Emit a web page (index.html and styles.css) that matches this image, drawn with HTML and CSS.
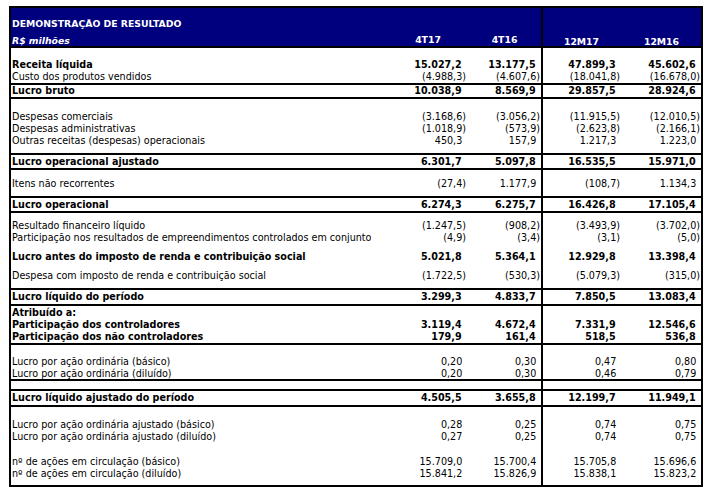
FILE: index.html
```html
<!DOCTYPE html>
<html lang="pt-BR">
<head>
<meta charset="utf-8">
<title>Demonstração de Resultado</title>
<link rel="stylesheet" href="styles.css">
</head>
<body>
<div class="sheet">
  <div class="head">
    <div class="title">DEMONSTRAÇÃO DE RESULTADO</div>
    <div class="unit">R$ milhões</div>
    <div class="hq">4T17</div>
    <div class="hq">4T16</div>
    <div class="hm">12M17</div>
    <div class="hm">12M16</div>
  </div>
  <div class="body">
    <div class="g11"></div>
    <div class="row b"><span>Receita líquida</span><span class="pos">15.027,2</span><span class="pos">13.177,5</span><span class="pos">47.899,3</span><span class="pos">45.602,6</span></div>
    <div class="row"><span>Custo dos produtos vendidos</span><span>(4.988,3)</span><span>(4.607,6)</span><span>(18.041,8)</span><span>(16.678,0)</span></div>
    <div class="row b bt bb"><span>Lucro bruto</span><span class="pos">10.038,9</span><span class="pos">8.569,9</span><span class="pos">29.857,5</span><span class="pos">28.924,6</span></div>
    <div class="g12"></div>
    <div class="row"><span>Despesas comerciais</span><span>(3.168,6)</span><span>(3.056,2)</span><span>(11.915,5)</span><span>(12.010,5)</span></div>
    <div class="row"><span>Despesas administrativas</span><span>(1.018,9)</span><span>(573,9)</span><span>(2.623,8)</span><span>(2.166,1)</span></div>
    <div class="row"><span>Outras receitas (despesas) operacionais</span><span class="pos">450,3</span><span class="pos">157,9</span><span class="pos">1.217,3</span><span class="pos">1.223,0</span></div>
    <div class="g6"></div>
    <div class="row b bt bb h13"><span>Lucro operacional ajustado</span><span class="pos">6.301,7</span><span class="pos">5.097,8</span><span class="pos">16.535,5</span><span class="pos">15.971,0</span></div>
    <div class="row h26"><span>Itens não recorrentes</span><span>(27,4)</span><span class="pos">1.177,9</span><span>(108,7)</span><span class="pos">1.134,3</span></div>
    <div class="row b bt bb h13"><span>Lucro operacional</span><span class="pos">6.274,3</span><span class="pos">6.275,7</span><span class="pos">16.426,8</span><span class="pos">17.105,4</span></div>
    <div class="g7"></div>
    <div class="row"><span>Resultado financeiro líquido</span><span>(1.247,5)</span><span>(908,2)</span><span>(3.493,9)</span><span>(3.702,0)</span></div>
    <div class="row"><span>Participação nos resultados de empreendimentos controlados em conjunto</span><span>(4,9)</span><span>(3,4)</span><span>(3,1)</span><span>(5,0)</span></div>
    <div class="g7"></div>
    <div class="row b"><span>Lucro antes do imposto de renda e contribuição social</span><span class="pos">5.021,8</span><span class="pos">5.364,1</span><span class="pos">12.929,8</span><span class="pos">13.398,4</span></div>
    <div class="g7"></div>
    <div class="row"><span>Despesa com imposto de renda e contribuição social</span><span>(1.722,5)</span><span>(530,3)</span><span>(5.079,3)</span><span>(315,0)</span></div>
    <div class="g6"></div>
    <div class="row b bt bb h14"><span>Lucro líquido do período</span><span class="pos">3.299,3</span><span class="pos">4.833,7</span><span class="pos">7.850,5</span><span class="pos">13.083,4</span></div>
    <div class="g1"></div>
    <div class="row b"><span>Atribuído a:</span><span></span><span></span><span></span><span></span></div>
    <div class="row b"><span>Participação dos controladores</span><span class="pos">3.119,4</span><span class="pos">4.672,4</span><span class="pos">7.331,9</span><span class="pos">12.546,6</span></div>
    <div class="row b bb"><span>Participação dos não controladores</span><span class="pos">179,9</span><span class="pos">161,4</span><span class="pos">518,5</span><span class="pos">536,8</span></div>
    <div class="g11"></div>
    <div class="row"><span>Lucro por ação ordinária (básico)</span><span class="pos">0,20</span><span class="pos">0,30</span><span class="pos">0,47</span><span class="pos">0,80</span></div>
    <div class="row bb h11"><span>Lucro por ação ordinária (diluído)</span><span class="pos">0,20</span><span class="pos">0,30</span><span class="pos">0,46</span><span class="pos">0,79</span></div>
    <div class="g8"></div>
    <div class="row b bt bb h14"><span>Lucro líquido ajustado do período</span><span class="pos">4.505,5</span><span class="pos">3.655,8</span><span class="pos">12.199,7</span><span class="pos">11.949,1</span></div>
    <div class="g12"></div>
    <div class="row"><span>Lucro por ação ordinária ajustado (básico)</span><span class="pos">0,28</span><span class="pos">0,25</span><span class="pos">0,74</span><span class="pos">0,75</span></div>
    <div class="row"><span>Lucro por ação ordinária ajustado (diluído)</span><span class="pos">0,27</span><span class="pos">0,25</span><span class="pos">0,74</span><span class="pos">0,75</span></div>
    <div class="g13"></div>
    <div class="row"><span>nº de ações em circulação (básico)</span><span class="pos">15.709,0</span><span class="pos">15.700,4</span><span class="pos">15.705,8</span><span class="pos">15.696,6</span></div>
    <div class="row"><span>nº de ações em circulação (diluído)</span><span class="pos">15.841,2</span><span class="pos">15.826,9</span><span class="pos">15.838,1</span><span class="pos">15.823,2</span></div>
    <div class="g5"></div>
  </div>
</div>
</body>
</html>
```

FILE: styles.css
```css
body {
  margin: 0;
  background: #fff;
  color: #000;
  font-family: "DejaVu Sans", Verdana, sans-serif;
  font-size: 9.6px;
}

.sheet {
  margin: 6px 0 0 9px;
  width: 690px;
  border: 2px solid #000;
}

.head {
  display: grid;
  grid-template-columns: 377px 80px 73px 81px 79px;
  grid-template-rows: 24px 14px;
  height: 38px;
  background: linear-gradient(#000, #000) 530px 0 / 2px 100% no-repeat, #00007f;
  color: #fff;
  font-weight: bold;
  font-size: 9.3px;
  border-bottom: 2px solid #000;
  line-height: 11px;
  white-space: nowrap;
}

.title {
  grid-column: 1 / 4;
  padding: 10px 0 0 1px;
}

.unit {
  grid-row: 2;
  font-style: italic;
  align-self: end;
  padding-left: 1px;
}

.hq {
  grid-row: 2;
  align-self: end;
  padding-bottom: 1px;
  text-align: center;
}

.hm {
  grid-row: 2;
  align-self: end;
  margin-bottom: -1px;
  text-align: center;
}

.body {
  background: linear-gradient(#000, #000) 530px 0 / 2px 100% no-repeat;
}

.row {
  display: grid;
  grid-template-columns: 377px 80px 73px 81px 79px;
  height: 12px;
  line-height: 12px;
  white-space: nowrap;
}

.row > span:first-child {
  padding-left: 1px;
}

.row > span:nth-child(n+2) {
  text-align: right;
}

.row > span:nth-child(2),
.row > span:nth-child(4) {
  padding-right: 2px;
}

.row > span:nth-child(3),
.row > span:nth-child(5) {
  padding-right: 1px;
}

.pos::after {
  content: ")";
  visibility: hidden;
}

.b { font-weight: bold; }
.bt { border-top: 2px solid #000; }
.bb { border-bottom: 2px solid #000; }

.h11 { height: 11px; line-height: 11px; }
.h13 { height: 13px; line-height: 13px; }
.h14 { height: 14px; line-height: 14px; }
.h26 { height: 24px; line-height: 24px; padding-top: 2px; }

.g1 { height: 1px; }
.g5 { height: 5px; }
.g6 { height: 6px; }
.g7 { height: 7px; }
.g8 { height: 8px; }
.g11 { height: 11px; }
.g12 { height: 12px; }
.g13 { height: 13px; }
```
